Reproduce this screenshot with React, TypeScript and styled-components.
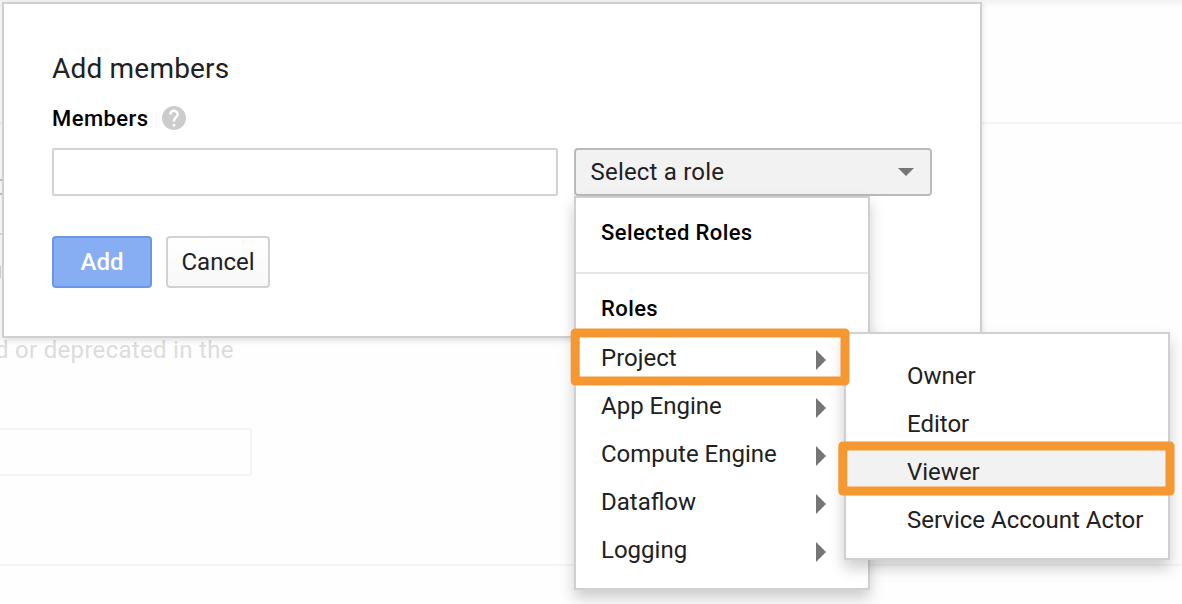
import React from "react";
import styled, { createGlobalStyle } from "styled-components";

const Global = createGlobalStyle`
  *, *::before, *::after { box-sizing: border-box; }
  body { margin: 0; background: #fefefe; font-family: Roboto, "Liberation Sans", sans-serif; color: #212121; overflow: hidden; }
`;

const Stage = styled.main`
  position: relative;
  width: 1182px;
  height: 604px;
  overflow: hidden;
`;

const Page = styled.div`
  display: flex;
  flex-direction: column;
  height: 604px;
  background: linear-gradient(#f2f2f2, #fefefe 8px);
`;

const PageHeader = styled.div`
  height: 124px;
  border-bottom: 2px solid #f4f4f4;
`;

const PageBody = styled.div`
  display: flex;
  flex-direction: column;
  height: 442px;
  border-bottom: 2px solid #f4f4f4;
`;

const PageControls = styled.div`
  height: 212px;
  padding-top: 55px;
`;

const PageTick = styled.div<{ $color: string; $gap: number; $tall?: boolean }>`
  width: ${(p) => (p.$tall ? 1 : 2)}px;
  height: ${(p) => (p.$tall ? 12 : 2)}px;
  margin-bottom: ${(p) => p.$gap}px;
  background: ${(p) => p.$color};
`;

const PageNote = styled.p`
  margin: 0 0 64px -5px;
  font-size: 24px;
  line-height: 28px;
  letter-spacing: 0.3px;
  color: #dcdcdc;
  white-space: nowrap;
`;

const PageField = styled.div`
  width: 254px;
  height: 48px;
  margin-left: -2px;
  border: 2px solid #f4f4f4;
  border-radius: 2px;
`;

const Dialog = styled.section`
  position: absolute;
  left: 2px;
  top: 2px;
  width: 980px;
  height: 336px;
  padding: 49px 48px 0;
  background: #fff;
  border: 2px solid #d0d0d0;
  box-shadow: 0 2px 6px rgba(0, 0, 0, 0.14);
`;

const Title = styled.h1`
  margin: 0;
  font-size: 28px;
  line-height: 32px;
  font-weight: 400;
  letter-spacing: 0.2px;
`;

const LabelRow = styled.div`
  display: flex;
  align-items: center;
  height: 28px;
  margin-top: 19px;
`;

const Label = styled.label`
  width: 110px;
  font-size: 22px;
  font-weight: 500;
  letter-spacing: 0.45px;
  color: #000;
`;

const FieldRow = styled.div`
  display: flex;
  gap: 16px;
  margin-top: 16px;
`;

const TextField = styled.input`
  width: 506px;
  height: 48px;
  border: 2px solid #d2d2d2;
  border-radius: 2px;
  background: #fff;
  outline: none;
`;

const RoleSelect = styled.div`
  display: flex;
  align-items: center;
  justify-content: space-between;
  width: 358px;
  height: 48px;
  padding: 0 16px 0 14.5px;
  border: 2px solid #bababa;
  border-radius: 4px;
  background: #f2f2f2;
  font-size: 24px;
  letter-spacing: 0.2px;
`;

const Actions = styled.div`
  display: flex;
  gap: 14px;
  margin-top: 40px;
`;

const Button = styled.button<{ $primary?: boolean }>`
  width: ${(p) => (p.$primary ? 100 : 104)}px;
  height: 52px;
  padding: 0;
  border: 2px solid ${(p) => (p.$primary ? "#6a97e6" : "#d2d2d2")};
  border-radius: 4px;
  background: ${(p) => (p.$primary ? "#87adf3" : "linear-gradient(#fff, #f8f8f8)")};
  color: ${(p) => (p.$primary ? "#fff" : "#212121")};
  font-family: inherit;
  font-size: 24px;
  font-weight: ${(p) => (p.$primary ? 500 : 400)};
`;

const Menu = styled.div`
  position: absolute;
  background: #fff;
  border: 2px solid #d0d0d0;
  box-shadow: 0 8px 14px rgba(0, 0, 0, 0.2);
`;

const RoleMenu = styled(Menu)`
  left: 574px;
  top: 196px;
  width: 296px;
  height: 394px;
`;

const SubMenu = styled(Menu)`
  left: 844px;
  top: 332px;
  width: 326px;
  height: 228px;
  padding-top: 18px;
`;

const MenuHeading = styled.div<{ $divided?: boolean }>`
  height: ${(p) => (p.$divided ? 76 : 60)}px;
  padding: 21px 25px 0;
  border-bottom: ${(p) => (p.$divided ? "2px solid #e6e6e6" : "none")};
  font-size: 22px;
  line-height: 28px;
  font-weight: 500;
  letter-spacing: 0.4px;
  color: #000;
`;

const MenuItem = styled.div<{ $indent: number; $active?: boolean }>`
  display: flex;
  align-items: center;
  justify-content: space-between;
  height: 48px;
  padding: 0 42px 0 ${(p) => p.$indent}px;
  background: ${(p) => (p.$active ? "#f2f2f2" : "transparent")};
  font-size: 24px;
  white-space: nowrap;
`;

const Annotations = styled.svg`
  position: absolute;
  left: 0;
  top: 0;
  fill: none;
  stroke: #f69831;
  stroke-width: 9px;
  stroke-linejoin: round;
  pointer-events: none;
`;

const Help = () => (
  <svg width="24" height="24" viewBox="2 2 20 20" fill="#ccc">
    <path d="M12 2C6.48 2 2 6.48 2 12s4.48 10 10 10 10-4.48 10-10S17.52 2 12 2zm1 17h-2v-2h2v2zm2.07-7.75l-.9.92C13.45 12.9 13 13.5 13 15h-2v-.5c0-1.1.45-2.1 1.17-2.83l1.24-1.26c.37-.36.59-.86.59-1.41 0-1.1-.9-2-2-2s-2 .9-2 2H8c0-2.21 1.79-4 4-4s4 1.79 4 4c0 .88-.36 1.68-.93 2.25z" />
  </svg>
);

const CaretDown = () => (
  <svg width="16" height="8" viewBox="0 0 16 8" fill="#757575">
    <path d="M0 0h16L8 8z" />
  </svg>
);

const CaretRight = styled(({ className }: { className?: string }) => (
  <svg className={className} width="10" height="20" viewBox="0 0 10 20" fill="#757575">
    <path d="M0 0l10 10L0 20z" />
  </svg>
))`
  margin-top: 4px;
`;

const categories = ["Project", "App Engine", "Compute Engine", "Dataflow", "Logging"];
const roles = ["Owner", "Editor", "Viewer", "Service Account Actor"];

export default function App() {
  return (
    <Stage>
      <Global />
      <Page>
        <PageHeader />
        <PageBody>
          <PageControls>
            <PageTick $color="#c4c4c4" $gap={12} />
            <PageTick $color="#c4c4c4" $gap={38} />
            <PageTick $color="#dedede" $gap={31} />
            <PageTick $color="#d4d4d4" $gap={0} $tall />
          </PageControls>
          <PageNote>d or deprecated in the</PageNote>
          <PageField />
        </PageBody>
      </Page>

      <Dialog>
        <Title>Add members</Title>
        <LabelRow>
          <Label htmlFor="members">Members</Label>
          <Help />
        </LabelRow>
        <FieldRow>
          <TextField id="members" />
          <RoleSelect>
            <span>Select a role</span>
            <CaretDown />
          </RoleSelect>
        </FieldRow>
        <Actions>
          <Button $primary>Add</Button>
          <Button>Cancel</Button>
        </Actions>
      </Dialog>

      <RoleMenu>
        <MenuHeading $divided>Selected Roles</MenuHeading>
        <MenuHeading>Roles</MenuHeading>
        {categories.map((name) => (
          <MenuItem key={name} $indent={25}>
            <span>{name}</span>
            <CaretRight />
          </MenuItem>
        ))}
      </RoleMenu>

      <SubMenu>
        {roles.map((name) => (
          <MenuItem key={name} $indent={61} $active={name === "Viewer"}>
            {name}
          </MenuItem>
        ))}
      </SubMenu>

      <Annotations width="1182" height="604" viewBox="0 0 1182 604">
        <rect x="575.2" y="332.9" width="269.8" height="48.2" />
        <rect x="842.8" y="445.9" width="327.2" height="45.2" />
      </Annotations>
    </Stage>
  );
}
